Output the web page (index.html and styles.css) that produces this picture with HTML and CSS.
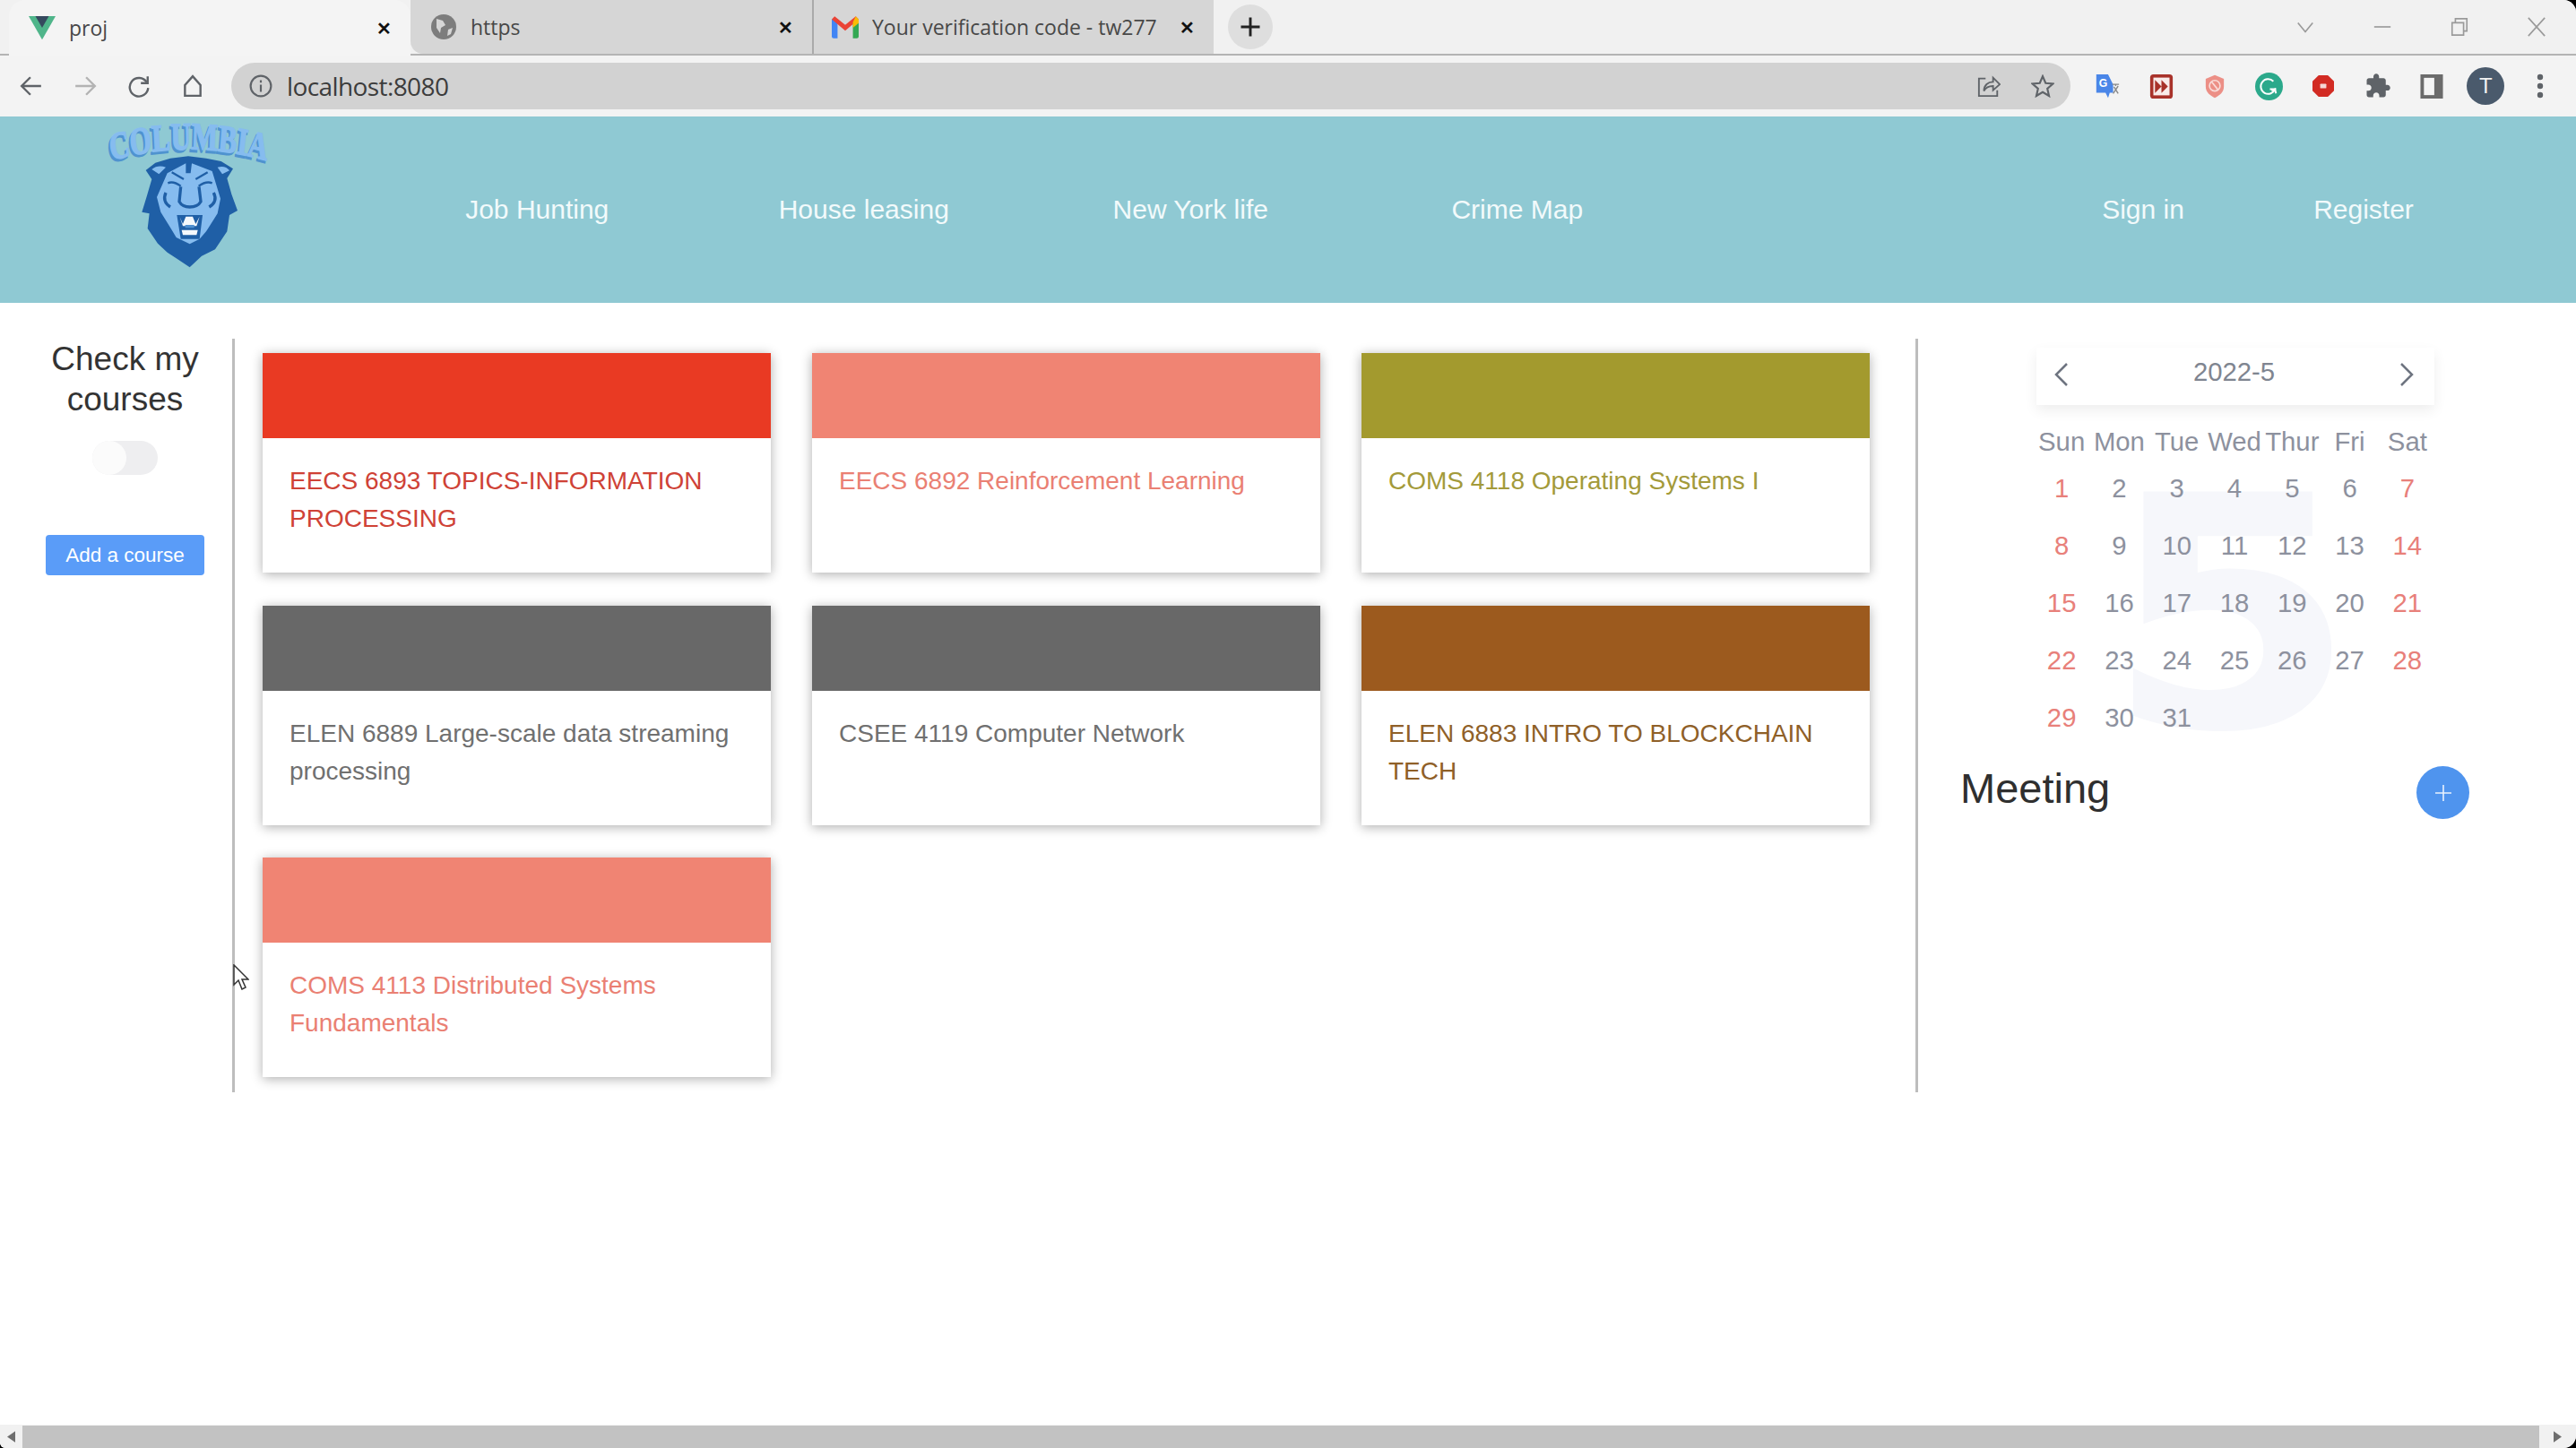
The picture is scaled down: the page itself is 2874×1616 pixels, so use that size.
FILE: index.html
```html
<!DOCTYPE html>
<html lang="en">
<head>
    <meta charset="UTF-8">
    <meta name="viewport" content="width=device-width, initial-scale=1.0">
    <title>proj</title>
    <link rel="stylesheet" href="styles.css">
</head>
<body>
<div class="window">

    <!-- Browser tabs -->
    <div class="tabstrip">
        <div class="tab tab-active">
            <svg class="favicon" viewBox="0 0 32 28"><path fill="#4fb58a" d="M0 0h32L16 28z"/><path fill="#35495e" d="M8 0h16l-8 14z"/></svg>
            <span class="tab-title">proj</span>
            <span class="tab-close">✕</span>
        </div>
        <div class="tab-group">
            <div class="tab">
                <svg class="favicon" viewBox="0 0 28 28"><circle cx="14" cy="14" r="14" fill="#7d7d7d"/><path fill="#d6d6d6" d="M6 5l7 2 3 5-5 3-1 6-4-6zM19 17l5-2-2 7-4 2z"/></svg>
                <span class="tab-title">https</span>
                <span class="tab-close">✕</span>
            </div>
            <div class="tab tab-sep">
                <svg class="favicon" viewBox="0 0 28 24"><path fill="#4285f4" d="M0 4h6v20H2a2 2 0 0 1-2-2z"/><path fill="#34a853" d="M22 4h6v18a2 2 0 0 1-2 2h-4z"/><path fill="#ea4335" d="M0 4l3-3 11 9 11-9 3 3-14 12z"/><path fill="#fbbc04" d="M22 7l3-6 3 3v4l-6 5z"/></svg>
                <span class="tab-title">Your verification code - tw277</span>
                <span class="tab-close">✕</span>
            </div>
        </div>
        <div class="new-tab"><svg viewBox="0 0 24 24"><path d="M12 3v18M3 12h18"/></svg></div>
        <div class="win-controls">
            <svg viewBox="0 0 24 24"><path d="M3 7l9 11 9-11"/></svg>
            <svg viewBox="0 0 24 24"><path d="M2 12h20"/></svg>
            <svg viewBox="0 0 24 24"><path d="M3 7h14v15H3zM7 7V2h14v15h-4"/></svg>
            <svg viewBox="0 0 24 24"><path d="M2 1l20 22M22 1L2 23"/></svg>
        </div>
    </div>

    <!-- Browser toolbar -->
    <div class="toolbar">
        <div class="tool"><svg viewBox="0 0 24 24"><path d="M22 12H3M11 3l-9 9 9 9"/></svg></div>
        <div class="tool tool-off"><svg viewBox="0 0 24 24"><path d="M2 12h19M13 3l9 9-9 9"/></svg></div>
        <div class="tool"><svg viewBox="0 0 24 24"><path d="M20 8a9.500 9.500 0 1 0 1.500 6"/><path d="M21 2v7h-7"/></svg></div>
        <div class="tool"><svg viewBox="0 0 24 24"><path d="M12 2l8 9v11H4V11z"/></svg></div>
        <div class="address">
            <svg class="addr-icon" viewBox="0 0 24 24"><circle cx="12" cy="12" r="10.500"/><path d="M12 10.500V18M12 6v2.500"/></svg>
            <span class="addr-text">localhost:8080</span>
            <svg class="addr-icon addr-share" viewBox="0 0 28 28"><path d="M10 5H2v21h22v-7"/><path d="M8 20c0-7 5-11 11-11V4l8 8-8 7v-5c-5 0-9 2-11 6z"/></svg>
            <svg class="addr-icon" viewBox="0 0 24 24"><path d="M12 2l3 7 7.500.700-5.700 5 1.700 7.500L12 18.300 5.500 22.200l1.700-7.500-5.700-5L9 9z"/></svg>
        </div>
        <div class="ext"><svg viewBox="0 0 30 32"><path fill="#4a86e8" d="M2 2h14l6 12v10h-4l-2 6-3-6H2z"/><text x="5" y="17" class="ext-g">G</text><path fill="none" stroke="#888" stroke-width="1.500" d="M21 14h8M25 14v2M22 25l6-9M23 17l5 8"/></svg></div>
        <div class="ext"><svg class="ext-ff" viewBox="0 0 30 32"><rect x="1" y="1" width="28" height="30" rx="4" fill="#a8322a"/><rect x="5" y="5" width="20" height="22" fill="#f9ecea"/><path fill="#a8322a" d="M7 8l8 8-8 8zM15 8l8 8-8 8z"/></svg></div>
        <div class="ext"><svg class="ext-shield" viewBox="0 0 28 32"><path fill="#ec8f86" d="M14 1l12 5v10c0 8-6 12-12 15C8 28 2 24 2 16V6z"/><circle cx="14" cy="15" r="7" fill="none" stroke="#f9dbd8" stroke-width="2"/><path stroke="#f9dbd8" stroke-width="2" d="M10 10l8 10"/></svg></div>
        <div class="ext"><svg class="ext-grammar" viewBox="0 0 32 32"><circle cx="16" cy="16" r="16" fill="#2ba98b"/><path fill="none" stroke="#fff" stroke-width="2" d="M21 10a8.500 8.500 0 1 0 2 9h-6"/><path fill="none" stroke="#fff" stroke-width="2" d="M19 21l4-2 1 5"/></svg></div>
        <div class="ext"><svg class="ext-stop" viewBox="0 0 28 28"><path fill="#d22b23" d="M8 0h12l8 8v12l-8 8H8l-8-8V8z"/><rect x="10" y="11" width="8" height="6" rx="1" fill="#f6d6d4"/></svg></div>
        <div class="ext"><svg viewBox="0 0 24 24"><path fill="#5f6368" d="M20.500 11H19V7c0-1.100-.9-2-2-2h-4V3.500C13 2.120 11.880 1 10.500 1S8 2.120 8 3.500V5H4c-1.100 0-1.990.9-1.990 2v3.800H3.500c1.490 0 2.700 1.210 2.700 2.700s-1.210 2.700-2.700 2.700H2V20c0 1.100.9 2 2 2h3.800v-1.500c0-1.490 1.210-2.700 2.700-2.700 1.490 0 2.700 1.210 2.700 2.700V22H17c1.100 0 2-.9 2-2v-4h1.500c1.380 0 2.500-1.120 2.500-2.500S21.880 11 20.500 11z"/></svg></div>
        <div class="ext"><svg class="ext-side" viewBox="0 0 26 28"><path fill="#6b6b6b" d="M0 0h26v28H0z"/><path fill="#f4f4f4" d="M4 4h12v20H4z"/></svg></div>
        <div class="ext"><span class="avatar">T</span></div>
        <div class="ext"><svg class="ext-dots" viewBox="0 0 8 28"><circle cx="4" cy="4" r="3.200"/><circle cx="4" cy="14" r="3.200"/><circle cx="4" cy="24" r="3.200"/></svg></div>
    </div>

    <!-- Site navigation -->
    <nav class="nav">
        <svg class="logo" viewBox="0 15 720 555">
            <defs><path id="logo-arc" d="M-20 168 Q360 82 740 168"/></defs>
            <g class="logo-word">
                <text class="logo-shadow"><textPath href="#logo-arc" startOffset="50%">COLUMBIA</textPath></text>
                <text class="logo-text"><textPath href="#logo-arc" startOffset="50%">COLUMBIA</textPath></text>
            </g>
            <!-- mane -->
            <path fill="#1f5fa6" d="M360 148 L300 155 L250 170 L218 195 L238 225 L222 280 L205 335 L230 340 L224 390 L258 440 L290 470 L320 490 L365 520 L405 482 L450 460 L490 400 L498 345 L525 330 L505 275 L490 222 L510 190 L470 165 L420 155z"/>
            <!-- ears -->
            <path fill="#86bcef" d="M238 192 Q258 176 285 185 L262 208z M458 185 Q485 178 498 196 L474 208z"/>
            <!-- face -->
            <path fill="#86bcef" d="M352 172 L352 205 L368 205 L372 172 L440 198 L468 290 L458 340 L420 400 L398 425 L365 442 L320 420 L296 380 L268 335 L255 285 L290 205z"/>
            <!-- brows, cheeks and muzzle -->
            <path fill="none" stroke="#1f5fa6" stroke-width="7" d="M305 202 L345 225 M425 202 L385 225 M292 238 Q310 230 335 248 M440 238 Q420 230 395 248"/>
            <path fill="none" stroke="#1f5fa6" stroke-width="10" d="M335 250 L330 300 Q340 318 365 318 Q392 318 402 300 L396 250 M285 270 Q272 300 300 318 M445 270 Q460 300 430 318"/>
            <path fill="#1f5fa6" d="M322 345 L408 345 L398 425 L335 425z"/>
            <path fill="#f4f8fc" d="M332 352 L342 375 L352 350 L375 350 L385 375 L398 350 L388 382 L342 382z M338 395 L392 395 L388 412 L342 412z"/>
            <path fill="#4f8fd0" d="M350 378 H380 V388 H350z"/>
        </svg>
        <div class="nav-links">
            <a class="nav-link">Job Hunting</a>
            <a class="nav-link">House leasing</a>
            <a class="nav-link">New York life</a>
            <a class="nav-link">Crime Map</a>
        </div>
        <div class="nav-auth">
            <a class="nav-link">Sign in</a>
            <a class="nav-link">Register</a>
        </div>
    </nav>

    <div class="content">
        <!-- Left column -->
        <aside class="sidebar">
            <h2 class="side-title">Check my courses</h2>
            <div class="toggle"><span class="toggle-knob"></span></div>
            <button class="add-btn">Add a course</button>
        </aside>

        <!-- Course cards -->
        <main class="courses">
            <div class="card">
                <div class="card-top red-bg"></div>
                <div class="card-text red-text">EECS 6893 TOPICS-INFORMATION PROCESSING</div>
            </div>
            <div class="card">
                <div class="card-top salmon-bg"></div>
                <div class="card-text salmon-text">EECS 6892 Reinforcement Learning</div>
            </div>
            <div class="card">
                <div class="card-top olive-bg"></div>
                <div class="card-text olive-text">COMS 4118 Operating Systems I</div>
            </div>
            <div class="card">
                <div class="card-top gray-bg"></div>
                <div class="card-text gray-text">ELEN 6889 Large-scale data streaming processing</div>
            </div>
            <div class="card">
                <div class="card-top gray-bg"></div>
                <div class="card-text gray-text">CSEE 4119 Computer Network</div>
            </div>
            <div class="card">
                <div class="card-top brown-bg"></div>
                <div class="card-text brown-text">ELEN 6883 INTRO TO BLOCKCHAIN TECH</div>
            </div>
            <div class="card">
                <div class="card-top salmon-bg"></div>
                <div class="card-text salmon-text">COMS 4113 Distributed Systems Fundamentals</div>
            </div>
        </main>

        <!-- Calendar and meetings -->
        <section class="panel">
            <div class="calendar">
                <div class="cal-head">
                    <svg class="cal-arrow" viewBox="0 0 18 28"><path d="M15 2L3 14l12 12"/></svg>
                    <span>2022-5</span>
                    <svg class="cal-arrow" viewBox="0 0 18 28"><path d="M3 2l12 12L3 26"/></svg>
                </div>
                <div class="cal-week">
                    <span>Sun</span><span>Mon</span><span>Tue</span><span>Wed</span><span>Thur</span><span>Fri</span><span>Sat</span>
                </div>
                <div class="cal-days">
                    <div class="cal-mark">5</div>
                    <span class="off">1</span><span>2</span><span>3</span><span>4</span><span>5</span><span>6</span><span class="off">7</span>
                    <span class="off">8</span><span>9</span><span>10</span><span>11</span><span>12</span><span>13</span><span class="off">14</span>
                    <span class="off">15</span><span>16</span><span>17</span><span>18</span><span>19</span><span>20</span><span class="off">21</span>
                    <span class="off">22</span><span>23</span><span>24</span><span>25</span><span>26</span><span>27</span><span class="off">28</span>
                    <span class="off">29</span><span>30</span><span>31</span>
                </div>
            </div>
            <div class="meeting">
                <h2 class="meeting-title">Meeting</h2>
                <button class="plus-btn"><svg viewBox="0 0 20 20"><path d="M10 1v18M1 10h18"/></svg></button>
            </div>
        </section>

        <svg class="cursor" viewBox="0 0 18 29"><path d="M1 1v22l5-5 4 10 4-2-4-9h7z"/></svg>
    </div>

    <!-- Page scrollbar -->
    <div class="hscroll">
        <span class="scroll-btn"><svg viewBox="0 0 10 14"><path d="M10 0v14L0 7z"/></svg></span>
        <span class="scroll-thumb"></span>
        <span class="scroll-btn"><svg viewBox="0 0 10 14"><path d="M0 0v14l10-7z"/></svg></span>
    </div>
</div>
</body>
</html>
```

FILE: styles.css
```css
html {
    background: #000;
}

body {
    margin: 0;
    font-family: "Liberation Sans", Arial, sans-serif;
}

.window {
    display: flex;
    flex-direction: column;
    height: 100vh;
    overflow: hidden;
    background: #fff;
    border-radius: 0 14px 14px 6px;
}

/* Browser tabs */
.tabstrip {
    display: flex;
    align-items: flex-end;
    height: 62px;
    background: #f1f1f1;
    border-bottom: 2px solid #b4b4b4;
    box-sizing: border-box;
    padding-left: 10px;
    font-family: "Open Sans", sans-serif;
}

.tab {
    display: flex;
    align-items: center;
    height: 60px;
    width: 448px;
    box-sizing: border-box;
    padding: 0 21px 0 22px;
    gap: 15px;
}

.tab-active {
    height: 62px;
    margin-bottom: -2px;
    background: #f4f4f4;
    border-radius: 18px 18px 0 0;
}

.tab-group {
    display: flex;
    height: 60px;
    background: #d6d6d6;
    border-radius: 0 0 0 14px;
}

.tab-sep {
    position: relative;
    border-left: 2px solid #aaa;
    background-clip: padding-box;
    padding-left: 20px;
}

.favicon {
    width: 30px;
    height: 28px;
    flex: none;
}

.tab-title {
    flex: 1;
    min-width: 0;
    white-space: nowrap;
    overflow: hidden;
    font-size: 23px;
    color: #484848;
}

.tab-close {
    flex: none;
    font-size: 20px;
    font-weight: bold;
    color: #111;
}

.new-tab {
    display: flex;
    justify-content: center;
    align-items: center;
    width: 50px;
    height: 50px;
    margin: 0 0 5px 16px;
    border-radius: 50%;
    background: #dedede;
}

.new-tab svg {
    width: 28px;
    height: 28px;
    fill: none;
    stroke: #222;
    stroke-width: 2.500;
}

.win-controls {
    display: flex;
    margin-left: auto;
    align-self: center;
    padding-right: 33px;
    gap: 64px;
}

.win-controls svg {
    width: 22px;
    height: 22px;
    fill: none;
    stroke: #9a9a9a;
    stroke-width: 1.800;
}

/* Browser toolbar */
.toolbar {
    display: flex;
    align-items: center;
    height: 68px;
    background: #f3f3f3;
    padding: 0 10px 0 5px;
}

.tool {
    display: flex;
    justify-content: center;
    width: 60px;
}

.tool svg {
    width: 26px;
    height: 26px;
    fill: none;
    stroke: #5f6368;
    stroke-width: 2.200;
}

.tool-off svg {
    stroke: #b3b3b3;
}

.address {
    display: flex;
    flex: 1;
    align-items: center;
    height: 52px;
    margin: 0 10px 0 13px;
    padding: 0 18px 0 20px;
    gap: 16px;
    background: #d2d2d2;
    border-radius: 26px;
}

.addr-icon {
    width: 26px;
    height: 26px;
    fill: none;
    stroke: #5f6368;
    stroke-width: 2;
}

.addr-text {
    flex: 1;
    font-family: "Open Sans", sans-serif;
    font-size: 28px;
    letter-spacing: -0.6px;
    color: #3c3c3c;
}

.addr-share {
    margin-right: 18px;
}

.ext {
    display: flex;
    justify-content: center;
    align-items: center;
    width: 60.400px;
}

.ext svg {
    width: 30px;
    height: 30px;
}

.ext .ext-ff { width: 27px; height: 29px; }
.ext .ext-shield { width: 26px; height: 27px; }
.ext .ext-grammar { width: 31px; height: 31px; }
.ext .ext-stop { width: 24px; height: 24px; }
.ext .ext-side { width: 26px; height: 27px; }

.ext .ext-dots {
    width: 8px;
    height: 28px;
    fill: #5f6368;
}

.ext-g {
    font-size: 13px;
    font-weight: bold;
    fill: #fff;
}

.avatar {
    width: 42px;
    height: 42px;
    border-radius: 50%;
    background: #4a5a6c;
    color: #f2f2f2;
    font-size: 24px;
    line-height: 42px;
    text-align: center;
}

/* Site navigation */
.nav {
    display: flex;
    align-items: center;
    height: 208px;
    background: #8fc9d3;
    padding-right: 114px;
}

.logo {
    flex: none;
    align-self: flex-start;
    width: 240px;
    height: 185px;
    margin: 0 87px 0 90px;
}

.logo-word {
    transform: translateX(362px) scaleX(0.73) translateX(-360px);
}

.logo-text,
.logo-shadow {
    font-family: "Liberation Serif", serif;
    font-size: 128px;
    font-weight: bold;
    text-anchor: middle;
}

.logo-text {
    fill: #86bcef;
    stroke: #86bcef;
    stroke-width: 5;
}

.logo-shadow {
    fill: #4f93cf;
    stroke: #4f93cf;
    stroke-width: 6;
    transform: translate(-7px, 8px);
}

.nav-links,
.nav-auth {
    display: flex;
}

.nav-auth {
    margin-left: auto;
}

.nav-link {
    font-size: 30px;
    color: #f2fafb;
    text-align: center;
}

.nav-links .nav-link {
    width: 364.500px;
}

.nav-auth .nav-link {
    width: 246px;
}

/* Main layout */
.content {
    position: relative;
    display: flex;
    align-items: flex-start;
    flex: 1;
    min-height: 0;
    padding-top: 40px;
}

.sidebar {
    display: flex;
    flex-direction: column;
    align-items: center;
    flex: none;
    box-sizing: border-box;
    width: 259px;
    padding-left: 20px;
}

.side-title {
    margin: 0;
    font-size: 37px;
    font-weight: normal;
    line-height: 45px;
    text-align: center;
    color: #333;
}

.toggle {
    display: flex;
    width: 73px;
    height: 38px;
    margin-top: 24px;
    background: #eeeef0;
    border-radius: 19px;
}

.toggle-knob {
    width: 38px;
    height: 38px;
    background: #fbfbfb;
    border-radius: 50%;
}

.add-btn {
    width: 177px;
    height: 45px;
    margin-top: 67px;
    padding: 0;
    border: none;
    border-radius: 4px;
    background: #5a9cf8;
    color: #fff;
    font-family: inherit;
    font-size: 22.500px;
}

/* Course cards */
.courses {
    display: grid;
    grid-template-columns: repeat(3, 567px);
    grid-auto-rows: 245px;
    gap: 36.500px 46px;
    align-content: start;
    flex: none;
    box-sizing: border-box;
    width: 1881px;
    height: 841px;
    padding: 16px 0 0 31px;
    border-left: 3px solid #bdbdbd;
    border-right: 3px solid #bdbdbd;
}

.card {
    background: #fff;
    box-shadow: 0 2px 12px rgba(0, 0, 0, 0.32);
}

.card-top {
    height: 95px;
}

.card-text {
    padding: 27px 30px 0;
    font-size: 28px;
    line-height: 42px;
}

.red-bg { background: #e93a23; }
.salmon-bg { background: #f08473; }
.olive-bg { background: #a39a2e; }
.gray-bg { background: #686868; }
.brown-bg { background: #9c5a1e; }

.red-text { color: #cf4236; }
.salmon-text { color: #ea8073; }
.olive-text { color: #a39a3a; }
.gray-text { color: #707070; }
.brown-text { color: #8f6028; }

/* Calendar */
.panel {
    flex: none;
    width: 733px;
    box-sizing: border-box;
    padding: 10px 0 0 47px;
}

.calendar {
    width: 450px;
    margin-left: 81px;
    color: #8d919e;
    font-size: 29.300px;
}

.cal-head {
    display: flex;
    justify-content: space-between;
    align-items: center;
    height: 64px;
    box-sizing: border-box;
    margin: 0 2px 21px 4px;
    padding: 0 22px 10px 19px;
    color: #7f8590;
    box-shadow: 0 6px 14px rgba(0, 0, 0, 0.07);
}

.cal-arrow {
    width: 18px;
    height: 28px;
    margin-top: 6px;
    fill: none;
    stroke: #6e7480;
    stroke-width: 2.500;
}

.cal-week,
.cal-days {
    display: grid;
    grid-template-columns: repeat(7, 1fr);
    text-align: center;
}

.cal-week {
    height: 40px;
    line-height: 40px;
}

.cal-days {
    position: relative;
    grid-auto-rows: 64px;
    line-height: 64px;
}

.cal-days span {
    position: relative;
}

.cal-days .off {
    color: #e8807a;
}

.cal-mark {
    position: absolute;
    top: -6px;
    left: -8px;
    right: 0;
    font-family: "DejaVu Sans", sans-serif;
    font-size: 360px;
    font-weight: bold;
    line-height: 360px;
    color: #f6f7fb;
    transform: scaleX(1.12);
}

/* Meetings */
.meeting {
    display: flex;
    justify-content: space-between;
    width: 568px;
    margin-top: 22px;
}

.meeting-title {
    margin: 0;
    font-size: 47px;
    font-weight: normal;
    line-height: 50px;
    color: #2f2f2f;
}

.plus-btn {
    display: flex;
    justify-content: center;
    align-items: center;
    width: 59px;
    height: 59px;
    padding: 0;
    border: none;
    border-radius: 50%;
    background: #4f94ee;
}

.plus-btn svg {
    width: 20px;
    height: 20px;
    fill: none;
    stroke: #e8f1fd;
    stroke-width: 1.600;
}

/* Mouse pointer over the page */
.cursor {
    position: absolute;
    left: 260px;
    top: 738px;
    width: 18px;
    height: 29px;
    fill: #fff;
    stroke: #333;
    stroke-width: 1.500;
}

/* Page scrollbar */
.hscroll {
    display: flex;
    height: 26px;
    flex: none;
    background: #f1f1f1;
}

.scroll-btn {
    display: flex;
    justify-content: center;
    align-items: center;
    width: 25px;
}

.scroll-btn svg {
    width: 9px;
    height: 13px;
    fill: #6e6e6e;
}

.scroll-thumb {
    flex: 1;
    margin-top: 1px;
    background: #c2c2c2;
}

.scroll-btn:last-child {
    width: 41px;
}
```
